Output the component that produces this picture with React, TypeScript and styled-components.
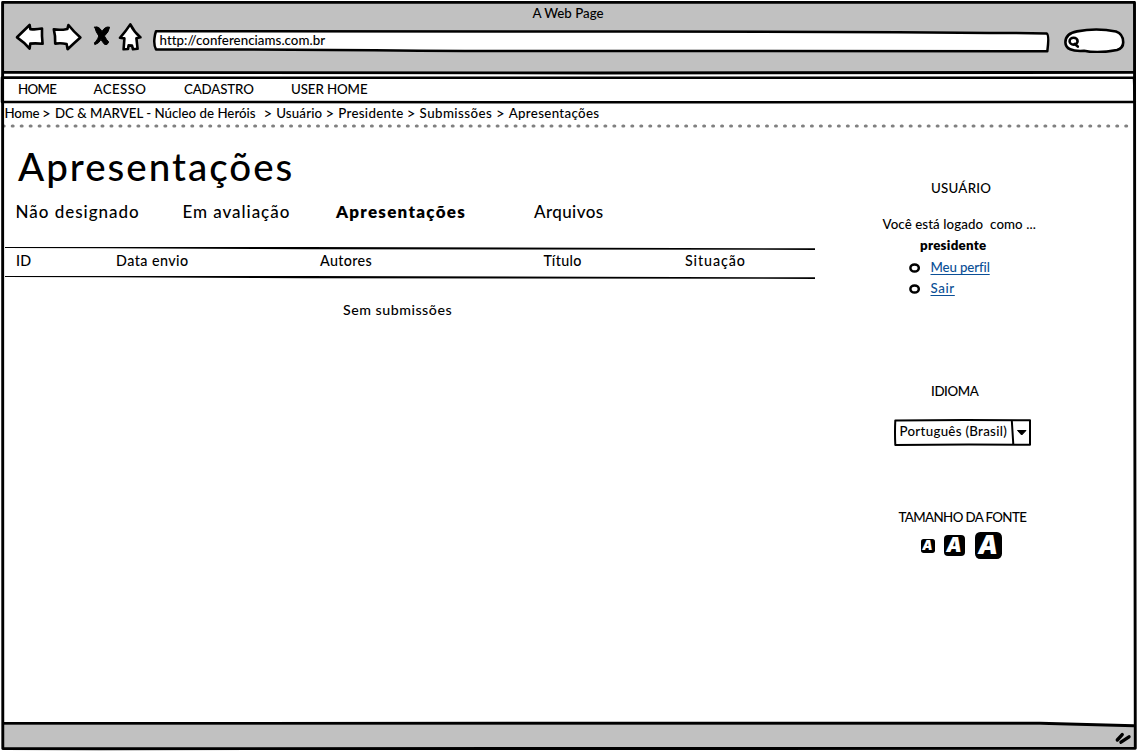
import React from 'react';
import styled, { createGlobalStyle } from 'styled-components';

const GlobalStyle = createGlobalStyle`
  * { box-sizing: border-box; }
  body {
    margin: 0;
    background: #fff;
    color: #000;
    font-family: Lato, "Open Sans", sans-serif;
    font-size: 13.3px;
    font-weight: 500;
    line-height: 20px;
  }
`;

const Browser = styled.div`
  position: relative;
  display: flex;
  flex-direction: column;
  width: 1137px;
  height: 751px;
  padding: 2px 2px 3px 3px;
  overflow: hidden;
  background: #fff;
`;

/* Hand-drawn outlines laid over the panels */
const Outline = styled.svg`
  position: absolute;
  inset: 0;
  width: 100%;
  height: 100%;
  overflow: visible;
  pointer-events: none;
  fill: none;
  stroke: #000;
  stroke-width: 2.9;
  stroke-linejoin: round;
`;

const Text = styled.span<{ $ls?: number }>`
  white-space: pre;
  letter-spacing: ${(p) => p.$ls ?? 0}px;
`;

const Header = styled.header`
  flex: 0 0 71px;
  background: #c1c1c1;
`;

const WindowTitle = styled.div`
  padding: 1px 2px 0 0;
  height: 21px;
  text-align: center;
`;

const Toolbar = styled.div`
  display: flex;
  height: 30px;
  padding-left: 11px;
`;

const ToolIcon = styled.svg`
  flex: none;
  height: 30px;
  fill: #fff;
  stroke: #000;
  stroke-width: 2.6;
  stroke-linejoin: round;
  stroke-linecap: round;
`;

const UrlField = styled.div`
  position: relative;
  flex: 0 0 901px;
  margin-left: 3px;
  padding: 7px 0 0 8.5px;
  height: 30px;
`;

const FieldShape = styled(Outline)`
  z-index: 0;
  fill: #fff;
  stroke-width: 2.5;
`;

const FieldText = styled(Text)`
  position: relative;
`;

const Menu = styled.nav`
  display: flex;
  flex: 0 0 31px;
  padding: 6px 0 0 15px;
`;

const MenuItem = styled.a<{ $w: number }>`
  width: ${(p) => p.$w}px;
`;

const Breadcrumb = styled.div`
  display: flex;
  flex: 0 0 19px;
  padding-left: 1.5px;
  line-height: 18px;
`;

const Crumb = styled.span<{ $w: number }>`
  flex: 0 0 ${(p) => p.$w}px;
`;

const Separator = styled.span`
  flex: 0 0 12.8px;
  font-size: 15px;
`;

const DottedRule = styled.svg`
  flex: none;
  width: 1132px;
  height: 6px;
  stroke: #808080;
  stroke-width: 3.2;
  stroke-linecap: round;
  stroke-dasharray: 0.8 8.18;
`;

const Main = styled.main`
  display: flex;
  flex: 1;
`;

const Content = styled.section`
  flex: 0 0 812px;
  padding: 15px 0 0 2px;
`;

const Heading = styled.h1`
  margin: 0;
  padding-left: 13px;
  font-size: 38.5px;
  font-weight: 500;
  line-height: 44px;
`;

const Tabs = styled.div`
  display: flex;
  margin-top: 12px;
  padding-left: 10.5px;
  font-size: 17px;
  line-height: 24px;
`;

const Tab = styled.a<{ $w: number; $active?: boolean }>`
  width: ${(p) => p.$w}px;
  font-weight: ${(p) => (p.$active ? 800 : 500)};
`;

const Table = styled.div`
  margin-top: 21px;
`;

const TableRule = styled.svg`
  display: block;
  width: 810px;
  height: 6px;
  fill: #000;
`;

const HeadRow = styled.div`
  display: flex;
  height: 23px;
  padding-left: 11px;
  font-size: 14.3px;
`;

const HeadCell = styled.div<{ $w: number }>`
  width: ${(p) => p.$w}px;
`;

const EmptyRow = styled.div`
  padding: 20px 0 0 338px;
  font-size: 14.2px;
`;

const Sidebar = styled.aside`
  display: flex;
  flex-direction: column;
  align-items: flex-start;
  padding: 49px 0 0 67.5px;
`;

const BlockTitle = styled.div<{ $indent: number; $top?: number }>`
  margin: ${(p) => p.$top ?? 0}px 0 0 ${(p) => p.$indent}px;
`;

const Greeting = styled.div`
  margin-top: 16px;
`;

const UserName = styled.div`
  margin: 1px 0 0 37.5px;
  font-weight: 800;
`;

const LinkList = styled.ul`
  margin: 1px 0 0 26px;
  padding: 0;
  list-style: none;
`;

const LinkItem = styled.li`
  display: flex;
  align-items: center;
  gap: 10px;
  height: 21.3px;
  line-height: 20px;
`;

const Bullet = styled.svg`
  width: 12px;
  height: 12px;
  margin-top: 2px;
  fill: #fff;
  stroke: #000;
  stroke-width: 2.5;
`;

const Link = styled.a`
  color: #0b4f96;
  text-decoration: underline;
  text-decoration-thickness: 1px;
  text-underline-offset: 2px;
  text-decoration-skip-ink: none;
`;

const Select = styled.div`
  position: relative;
  width: 138px;
  height: 28px;
  margin: 17px 0 0 11px;
  padding: 3px 0 0 6px;
`;

const SizeIcons = styled.div`
  display: flex;
  align-items: center;
  height: 28px;
  margin: 5px 0 0 38px;
`;

const SizeButton = styled.span<{ $size: number; $gap: number }>`
  display: flex;
  align-items: center;
  justify-content: center;
  width: ${(p) => p.$size}px;
  height: ${(p) => p.$size}px;
  margin-right: ${(p) => p.$gap}px;
  border-radius: ${(p) => p.$size * 0.19}px;
  background: #000;
  color: #fff;
  font-family: Inter, sans-serif;
  font-size: ${(p) => p.$size * 0.93}px;
  font-weight: 900;
  font-style: italic;
  line-height: 1;
`;

const Footer = styled.footer`
  flex: 0 0 23px;
  background: #c1c1c1;
`;

const Grip = styled.svg`
  display: block;
  width: 24px;
  height: 20px;
  margin: 3px 0 0 auto;
  stroke: #000;
  stroke-width: 3.4;
  stroke-linecap: round;
`;

const crumbs: [string, number, number][] = [
  ['Home', 37.6, -0.2],
  ['DC & MARVEL - Núcleo de Heróis', 208.5, 0],
  ['Usuário', 49.3, 0.15],
  ['Presidente', 68.5, 0.3],
  ['Submissões', 76.3, 0.45],
  ['Apresentações', 95, 0.33],
];

const columns: [string, number, number][] = [
  ['ID', 100, 0.3],
  ['Data envio', 204, 0.45],
  ['Autores', 223.5, 0.35],
  ['Título', 141.5, 0.35],
  ['Situação', 80, 0.9],
];

const links: [string, number][] = [
  ['Meu perfil', -0.13],
  ['Sair', 0.6],
];

export default function App() {
  return (
    <>
      <GlobalStyle />
      <Browser>
        <Header>
          <WindowTitle>
            <Text>A Web Page</Text>
          </WindowTitle>
          <Toolbar>
            <ToolIcon width="34" viewBox="14 23 34 30">
              <path d="M17 37.3 29.6 25 30.4 29.2Q36 29.8 42 28.6 41.7 36 42.6 43.8 36 43 30.3 43.6L29.6 48.6Q24 42 17 37.3Z" />
            </ToolIcon>
            <ToolIcon width="38" viewBox="48 23 38 30">
              <path d="M53.8 29.3Q60 30.5 67.4 28.9L68.4 25Q74 32 80.4 37.4 74 43 67.6 49.2L66.6 44Q61 42.6 55.2 43.6 55.6 36 53.8 29.3Z" />
            </ToolIcon>
            <ToolIcon width="28" viewBox="86 23 28 30">
              <path strokeWidth="1" fill="#000" d="M94.7 27.2Q99 25.6 102 31.6 105 26 109.6 27.2 108.6 32.5 104.4 36 106.6 40 108.7 42 107.5 45.6 104.6 44.4 102.3 41.8 101 39.6 98.6 43.8 94.8 44.6 93.6 42.5 95.8 41.4 98 39 98.8 36 95.8 32 94.7 27.2Z" />
            </ToolIcon>
            <ToolIcon width="34" viewBox="114 23 34 30">
              <path d="M130.3 24.4Q134 32 140.4 37.3L136.4 38.2 137.6 48.8 133 49.3 132 45.6 128.6 45.4 128 49 123.6 49.3 124.4 38.4 120 37.8Q126 31 130.3 24.4Z" />
            </ToolIcon>
            <UrlField>
              <FieldShape viewBox="151 23 901 30">
                <path d="M156 31.3Q400 31.6 640 31.6T1046.5 33.4Q1049.5 34.5 1047.3 51.3 800 50.6 640 51T330 50Q240 49.3 156 49.4 153.6 45 154.5 38 155 34 156 31.3Z" />
              </FieldShape>
              <FieldText $ls={0.04}>http://conferenciams.com.br</FieldText>
            </UrlField>
            <ToolIcon width="78" viewBox="1052 23 78 30">
              <path d="M1077 31.4Q1097 27.5 1116 31.6 1123 34 1123.2 42 1123.4 48 1117 50 1098 53.8 1084 50.8 1065.6 52 1065.4 42.4 1065.4 33.5 1077 31.4Z" />
              <ellipse cx="1073.6" cy="41.2" rx="4" ry="3.4" />
              <path d="M1074.8 44 1077.8 46.6" />
            </ToolIcon>
          </Toolbar>
        </Header>
        <Menu>
          <MenuItem $w={75.5}><Text $ls={-0.7}>HOME</Text></MenuItem>
          <MenuItem $w={90.5}><Text $ls={0.4}>ACESSO</Text></MenuItem>
          <MenuItem $w={107}><Text $ls={-0.15}>CADASTRO</Text></MenuItem>
          <MenuItem $w={90}><Text $ls={-0.1}>USER HOME</Text></MenuItem>
        </Menu>
        <Breadcrumb>
          {crumbs.map(([label, width, ls], i) => (
            <React.Fragment key={label}>
              {i > 0 && <Separator>&gt;</Separator>}
              <Crumb $w={width}><Text $ls={ls}>{label}</Text></Crumb>
            </React.Fragment>
          ))}
        </Breadcrumb>
        <DottedRule viewBox="3 123 1132 6">
          <path d="M3.3 126H1130" />
        </DottedRule>
        <Main>
          <Content>
            <Heading><Text $ls={2}>Apresentações</Text></Heading>
            <Tabs>
              <Tab $w={167}><Text $ls={0.98}>Não designado</Text></Tab>
              <Tab $w={153.5}><Text $ls={0.95}>Em avaliação</Text></Tab>
              <Tab $w={198} $active><Text $ls={1.25}>Apresentações</Text></Tab>
              <Tab $w={80}><Text $ls={0.4}>Arquivos</Text></Tab>
            </Tabs>
            <Table>
              <TableRule viewBox="0 0 810 6">
                <path d="M0 2 300 2 810 3.3V4.9L300 4.3 100 3.3 0 3Z" />
              </TableRule>
              <HeadRow>
                {columns.map(([label, width, ls]) => (
                  <HeadCell key={label} $w={width}><Text $ls={ls}>{label}</Text></HeadCell>
                ))}
              </HeadRow>
              <TableRule viewBox="0 0 810 6">
                <path d="M0 2 300 2 810 3.3V4.9L300 4.3 100 3.3 0 3Z" />
              </TableRule>
              <EmptyRow><Text $ls={0.52}>Sem submissões</Text></EmptyRow>
            </Table>
          </Content>
          <Sidebar>
            <BlockTitle $indent={48.5}><Text $ls={0.25}>USUÁRIO</Text></BlockTitle>
            <Greeting><Text $ls={0.09}>Você está logado  como ...</Text></Greeting>
            <UserName><Text $ls={0.28}>presidente</Text></UserName>
            <LinkList>
              {links.map(([label, ls]) => (
                <LinkItem key={label}>
                  <Bullet viewBox="0 0 12 12"><ellipse cx="5.6" cy="6" rx="4.2" ry="3.6" /></Bullet>
                  <Link><Text $ls={ls}>{label}</Text></Link>
                </LinkItem>
              ))}
            </LinkList>
            <BlockTitle $indent={48.5} $top={82.4}><Text $ls={-0.4}>IDIOMA</Text></BlockTitle>
            <Select>
              <FieldShape viewBox="894 418 138 28">
                <path strokeWidth="2" d="M895.3 420.4Q960 419.5 1030 420.3L1030 444.8Q960 444 895.3 445 894.7 432 895.3 420.4ZM1011.8 420.5 1013.3 444.5" />
                <path fill="#000" strokeWidth="1" d="M1017.5 430.5H1026L1021.7 435Z" />
              </FieldShape>
              <FieldText $ls={0.3}>Português (Brasil)</FieldText>
            </Select>
            <BlockTitle $indent={16} $top={61}><Text $ls={-0.61}>TAMANHO DA FONTE</Text></BlockTitle>
            <SizeIcons>
              <SizeButton $size={14} $gap={9}>A</SizeButton>
              <SizeButton $size={21} $gap={10}>A</SizeButton>
              <SizeButton $size={27} $gap={0}>A</SizeButton>
            </SizeIcons>
          </Sidebar>
        </Main>
        <Footer>
          <Grip viewBox="1111 728 24 20">
            <path d="M1117.3 740 1122.2 734.6M1121 742.2 1129 736.8" />
          </Grip>
        </Footer>
        <Outline viewBox="0 0 1137 751">
          <path d="M2.6 2.4Q600 1.8 1134.5 2.4L1134.8 400 1135.3 748.3Q600 747.3 100 748.7L2.8 748.5Q1.2 300 2.6 2.4Z" />
          <path d="M3 72.4Q300 73.2 600 73T1134 72.4" />
          <path strokeWidth="2.5" d="M2 77.6Q500 77.4 600 77.8T1134 77.7L1134.8 102Q700 102.4 500 102.3T2 101.9Z" />
          <path d="M3 723.4Q500 724 1040 723.2L1134 725.7" />
        </Outline>
      </Browser>
    </>
  );
}
